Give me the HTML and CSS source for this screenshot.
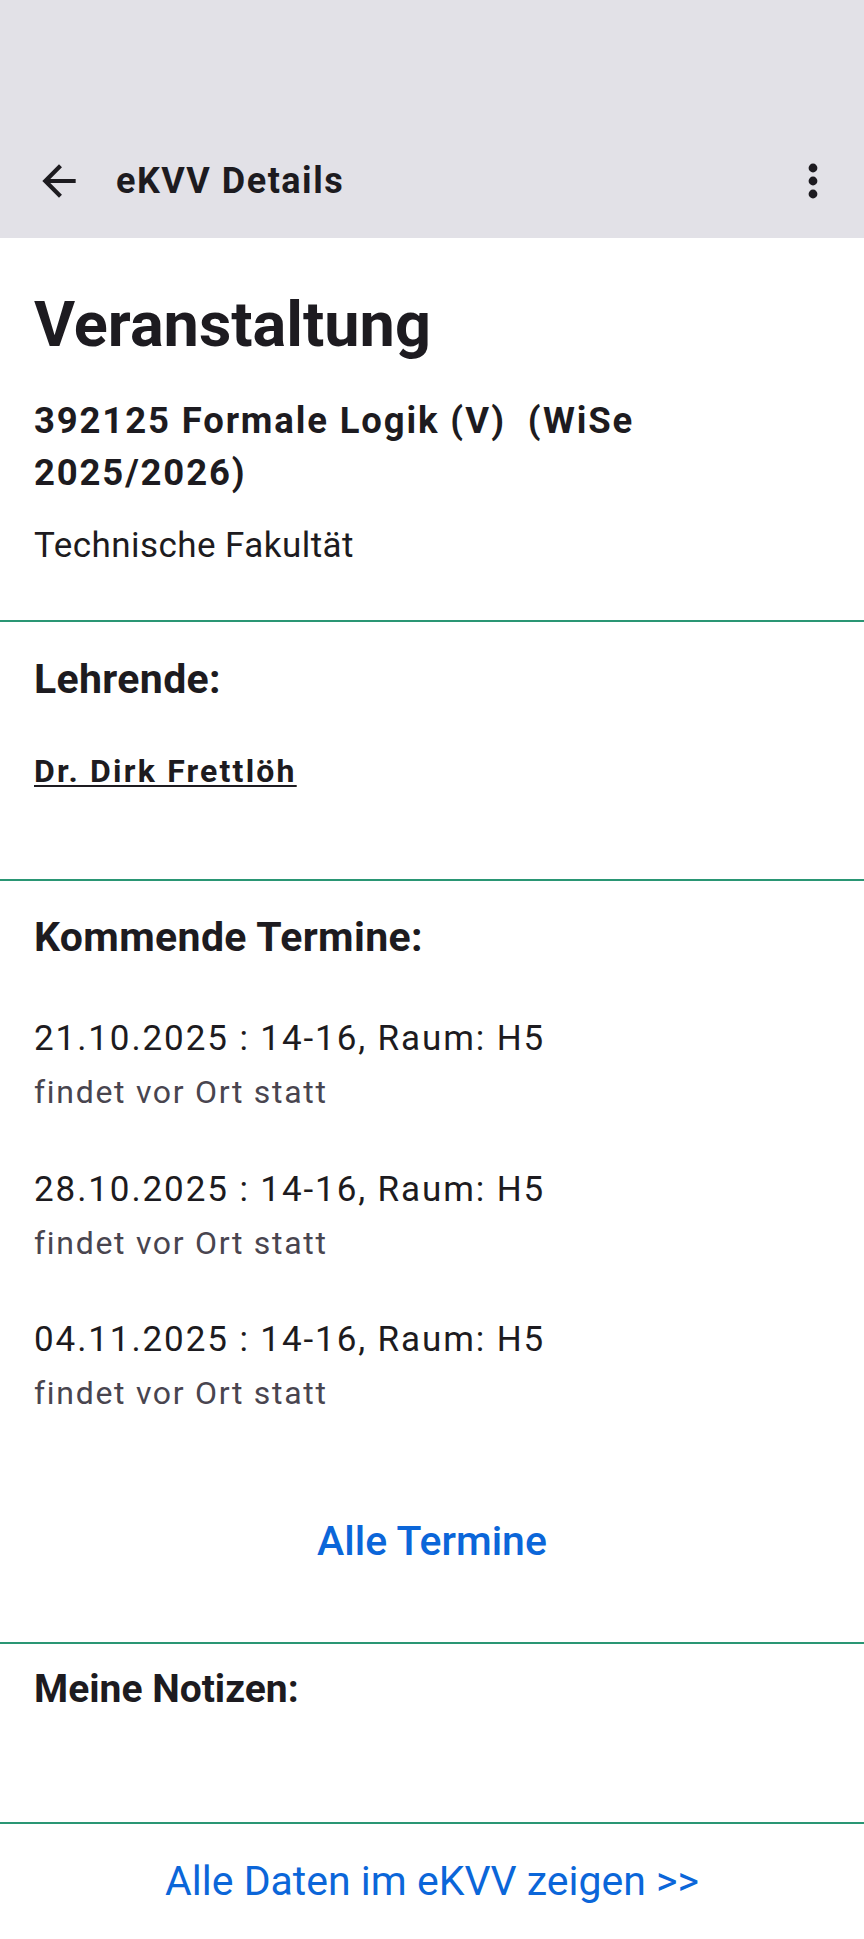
FILE: index.html
```html
<!DOCTYPE html>
<html lang="de">
<head>
<meta charset="utf-8">
<title>eKVV Details</title>
<link rel="stylesheet" href="styles.css">
</head>
<body>
<div class="screen">
  <header class="appbar">
    <div class="toolbar">
      <button class="icon-btn back" aria-label="Zurück">
        <svg viewBox="0 0 24 24" width="50" height="50"><path d="M20 11H7.83l5.59-5.59L12 4l-8 8 8 8 1.41-1.41L7.83 13H20v-2z" fill="currentColor"/></svg>
      </button>
      <div class="title">eKVV Details</div>
      <button class="icon-btn more" aria-label="Mehr">
        <svg viewBox="0 0 50 50" width="50" height="50"><circle cx="25" cy="12" r="4.4" fill="currentColor"/><circle cx="25" cy="25" r="4.4" fill="currentColor"/><circle cx="25" cy="38" r="4.4" fill="currentColor"/></svg>
      </button>
    </div>
  </header>

  <main class="content">
    <section class="section intro">
      <h1 class="page-title">Veranstaltung</h1>
      <p class="course-title">392125 Formale Logik (V)&nbsp; (WiSe 2025/2026)</p>
      <p class="faculty">Technische Fakultät</p>
    </section>

    <section class="section teachers">
      <h2 class="section-title">Lehrende:</h2>
      <a class="teacher" href="#">Dr. Dirk Frettlöh</a>
    </section>

    <section class="section dates">
      <h2 class="section-title">Kommende Termine:</h2>
      <ul class="date-list">
        <li class="date-item">
          <div class="date-main">21.10.2025 : 14-16, Raum: H5</div>
          <div class="date-sub">findet vor Ort statt</div>
        </li>
        <li class="date-item">
          <div class="date-main">28.10.2025 : 14-16, Raum: H5</div>
          <div class="date-sub">findet vor Ort statt</div>
        </li>
        <li class="date-item">
          <div class="date-main">04.11.2025 : 14-16, Raum: H5</div>
          <div class="date-sub">findet vor Ort statt</div>
        </li>
      </ul>
      <div class="btn-row"><a class="text-btn" href="#">Alle Termine</a></div>
    </section>

    <section class="section notes">
      <h2 class="section-title notes-title">Meine Notizen:</h2>
    </section>

    <section class="section footer-link">
      <a class="all-data" href="#">Alle Daten im eKVV zeigen &gt;&gt;</a>
    </section>
  </main>
</div>
</body>
</html>
```

FILE: styles.css
```css
* { box-sizing: border-box; }

html, body {
  margin: 0;
  padding: 0;
  background: #ffffff;
}

body {
  font-family: Roboto, "Noto Sans", "Liberation Sans", sans-serif;
  color: #1d1b20;
}

.screen {
  width: 864px;
  min-height: 1939px;
  background: #ffffff;
}

/* App bar */
.appbar {
  height: 238px;
  background: #e2e1e7;
  display: flex;
  flex-direction: column;
  justify-content: flex-end;
}

.toolbar {
  height: 114px;
  display: flex;
  align-items: center;
  padding: 0 26px 0 34px;
}

.icon-btn {
  width: 50px;
  height: 50px;
  padding: 0;
  margin: 0;
  border: 0;
  background: transparent;
  color: #1d1b20;
  display: flex;
  align-items: center;
  justify-content: center;
}

.icon-btn svg { display: block; }

.title {
  flex: 1;
  margin-left: 32px;
  font-size: 36px;
  line-height: 48px;
  font-weight: 700;
  letter-spacing: 1.5px;
  color: #1d1b20;
}

/* Content */
.content { display: flex; flex-direction: column; }

.section {
  padding: 0 34px;
  border-top: 2px solid #2a9674;
}

.section.intro {
  border-top: 0;
  padding-top: 50px;
  padding-bottom: 48px;
}

.page-title {
  margin: 0;
  font-size: 63px;
  line-height: 74px;
  font-weight: 700;
}

.course-title {
  margin: 33px 0 0;
  max-width: 740px;
  font-size: 36.5px;
  line-height: 52px;
  font-weight: 700;
  letter-spacing: 1.85px;
}

.faculty {
  margin: 21px 0 0;
  font-size: 35px;
  line-height: 52px;
  font-weight: 400;
  letter-spacing: 0.45px;
}

.section-title {
  margin: 0;
  font-size: 41px;
  line-height: 48px;
  font-weight: 700;
  letter-spacing: 0.35px;
}

.teachers {
  padding-top: 33px;
  padding-bottom: 88px;
}

.teacher {
  display: block;
  margin-top: 48px;
  font-size: 32px;
  line-height: 40px;
  font-weight: 700;
  letter-spacing: 2.2px;
  color: #1d1b20;
  text-decoration: underline;
  text-decoration-thickness: 2px;
  text-underline-offset: 3px;
}

.dates {
  padding-top: 32px;
  padding-bottom: 77px;
}

.date-list {
  list-style: none;
  margin: 52px 0 0;
  padding: 0;
  display: flex;
  flex-direction: column;
  gap: 44.5px;
}

.date-main {
  font-size: 35px;
  line-height: 52px;
  font-weight: 400;
  letter-spacing: 1.9px;
  color: #1d1b20;
}

.date-sub {
  font-size: 32px;
  line-height: 54px;
  font-weight: 400;
  letter-spacing: 1.7px;
  color: #49454f;
}

.btn-row {
  margin-top: 97px;
  display: flex;
  justify-content: center;
}

.text-btn {
  font-size: 41px;
  line-height: 48px;
  font-weight: 500;
  color: #0b66d9;
  text-decoration: none;
}

.notes {
  padding-top: 21px;
  padding-bottom: 109px;
}

.notes-title {
  font-size: 39px;
  letter-spacing: 0;
}

.footer-link {
  padding-top: 33px;
  display: flex;
  justify-content: center;
}

.all-data {
  font-size: 41px;
  line-height: 48px;
  font-weight: 400;
  color: #0b66d9;
  text-decoration: none;
}
```
